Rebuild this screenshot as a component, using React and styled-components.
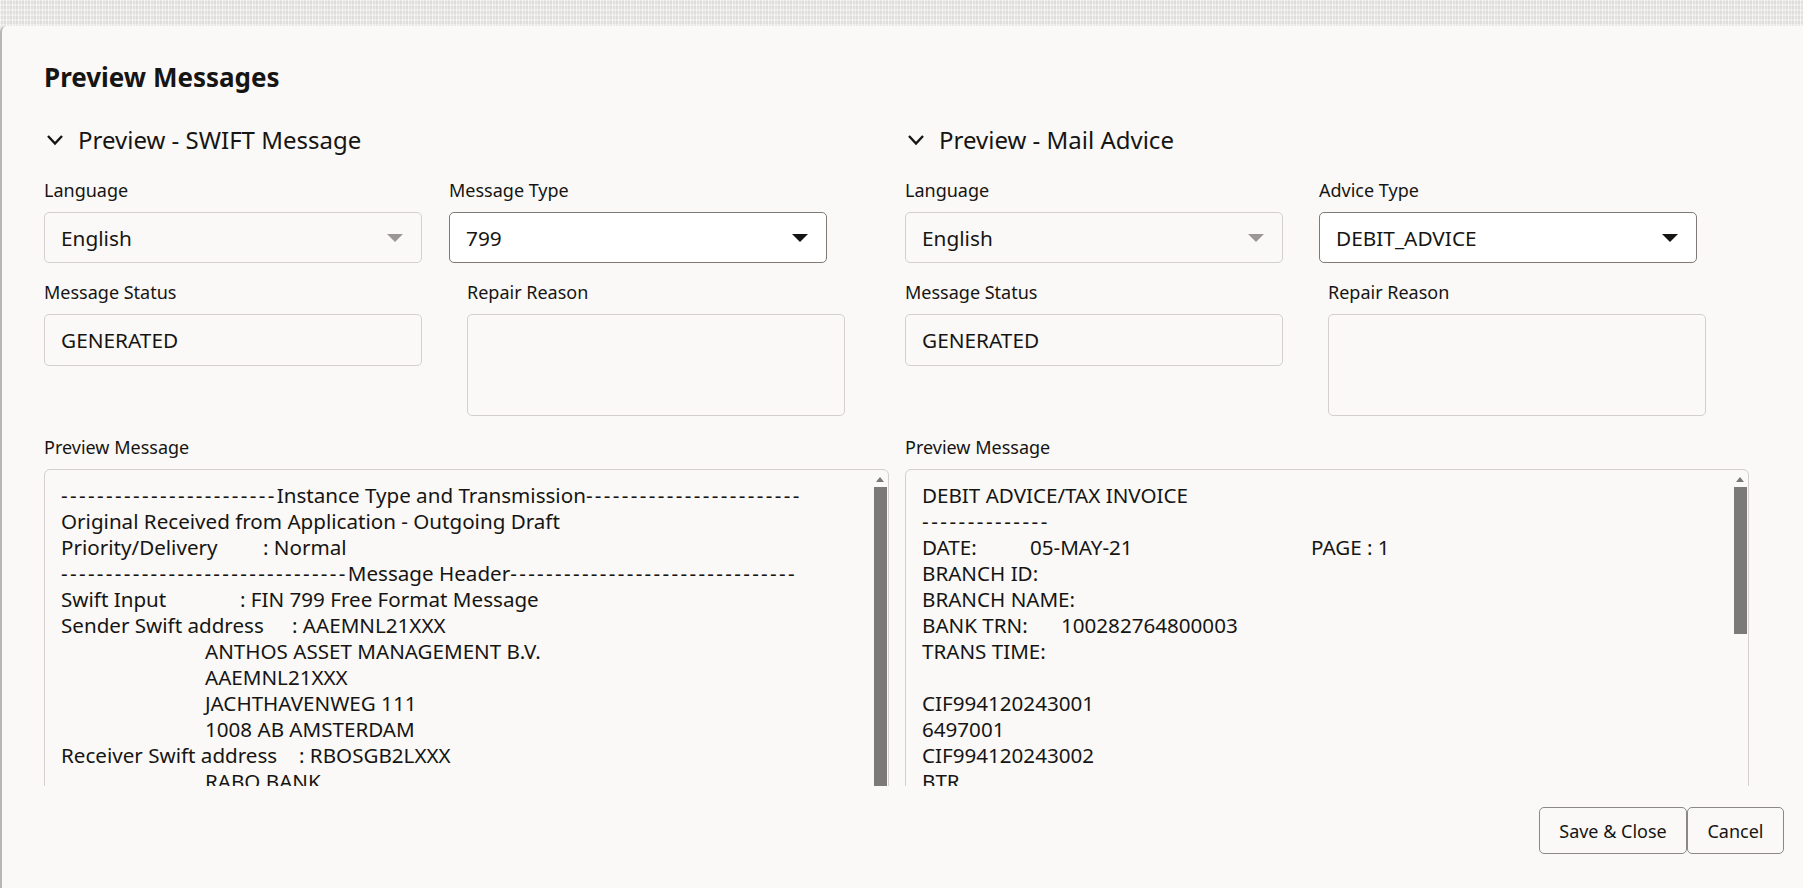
import styled, { createGlobalStyle } from "styled-components";

const GlobalStyle = createGlobalStyle`
  html, body {
    margin: 0;
    padding: 0;
    height: 100%;
    overflow: hidden;
  }
  body {
    font-family: "Noto Sans", "Liberation Sans", sans-serif;
    color: #161513;
    background: #ebeae8;
  }
`;

const Page = styled.div`
  height: 888px;
  padding-top: 26px;
  box-sizing: border-box;
  background:
    repeating-linear-gradient(90deg, rgba(255,255,255,0.5) 0 1px, rgba(0,0,0,0.015) 1px 3px, rgba(255,255,255,0.25) 3px 4px, rgba(0,0,0,0.03) 4px 6px),
    repeating-linear-gradient(0deg, rgba(255,255,255,0.3) 0 2px, rgba(0,0,0,0.02) 2px 5px),
    #e9e8e6;
  background-size: 100% 26px;
  background-repeat: no-repeat;
`;

const Dialog = styled.div`
  height: 862px;
  background: #faf9f7;
  border-left: 2px solid #b8b7b5;
  border-top-left-radius: 6px;
  display: flex;
  flex-direction: column;
  box-sizing: border-box;
`;

const Title = styled.h1`
  margin: 0;
  padding: 36px 0 0 42px;
  font-size: 26px;
  line-height: 30px;
  font-weight: 700;
`;

const Body = styled.div`
  flex: 1;
  overflow: hidden;
  display: grid;
  grid-template-columns: 845px 844px;
  column-gap: 16px;
  padding: 34px 0 0 42px;
`;

const Column = styled.section`
  display: flex;
  flex-direction: column;
`;

const SectionHead = styled.div`
  display: flex;
  align-items: center;
  gap: 14px;
  padding-left: 2px;
  font-size: 24px;
  line-height: 28px;
  margin-bottom: 26px;
`;

const FieldRow = styled.div`
  display: flex;
  align-items: flex-start;
  gap: ${(p) => p.gap}px;
  margin-bottom: ${(p) => p.mb}px;
`;

const Field = styled.div`
  display: flex;
  flex-direction: column;
  width: ${(p) => p.w || 378}px;
  margin-left: ${(p) => p.offset || 0}px;
`;

const Label = styled.label`
  font-size: 18px;
  line-height: 20px;
  margin-bottom: 12px;
  white-space: nowrap;
`;

const Box = styled.div`
  box-sizing: border-box;
  height: ${(p) => p.h || 52}px;
  border: 1px solid ${(p) => (p.active ? "#7d7a77" : "#d3d0cc")};
  border-radius: 5px;
  background: ${(p) => (p.active ? "#ffffff" : "#faf9f7")};
  display: flex;
  align-items: center;
  justify-content: space-between;
  padding: 0 16px;
  font-size: 20.8px;
`;

const Caret = styled.span`
  width: 0;
  height: 0;
  border-left: 8px solid transparent;
  border-right: 8px solid transparent;
  border-top: 8px solid ${(p) => (p.active ? "#161513" : "#9a9794")};
  margin-right: 2px;
`;

const Preview = styled.div`
  box-sizing: border-box;
  height: 340px;
  width: ${(p) => p.w}px;
  border: 1px solid #d3d0cc;
  border-radius: 6px;
  display: flex;
  background: #faf9f7;
`;

const PreviewText = styled.div`
  flex: 1;
  padding: 12px 16px 0 16px;
  font-size: 20.6px;
  line-height: 26px;
  white-space: pre;
  overflow: hidden;
`;

const Line = styled.div`
  display: flex;
  height: 26px;
`;

const Key = styled.span`
  display: inline-block;
  width: ${(p) => p.w}px;
  flex: none;
`;

const Dashes = styled.span`
  letter-spacing: ${(p) => p.spacing}px;
`;

const ScrollTrack = styled.div`
  width: 14px;
  display: flex;
  flex-direction: column;
  align-items: center;
  padding-top: 7px;
  margin-right: 1px;
`;

const ScrollArrow = styled.span`
  width: 0;
  height: 0;
  border-left: 4px solid transparent;
  border-right: 4px solid transparent;
  border-bottom: 5px solid #7a7876;
  margin-bottom: 5px;
`;

const Thumb = styled.div`
  width: 13px;
  height: ${(p) => p.h}px;
  background: #7b7a78;
`;

const Footer = styled.div`
  height: 102px;
  display: flex;
  justify-content: flex-end;
  align-items: flex-start;
  padding: 21px 19px 0 0;
  box-sizing: border-box;
`;

const Button = styled.button`
  height: 47px;
  padding: 0;
  font-family: inherit;
  font-size: 18px;
  white-space: nowrap;
  color: #161513;
  background: #faf9f7;
  border: 1px solid #8c8985;
  border-radius: 5px;
  cursor: pointer;
  width: ${(p) => p.w}px;
`;

const Chevron = () => (
  <svg width="18" height="12" viewBox="0 0 18 12">
    <polyline points="2,2 9,9.5 16,2" fill="none" stroke="#161513" strokeWidth="2.4" />
  </svg>
);

const dash = (n) => "-".repeat(n);

const swiftLines = [
  { d: 24, s: 2.36, v: "Instance Type and Transmission" },
  { v: "Original Received from Application - Outgoing Draft" },
  { k: "Priority/Delivery", w: 202, v: ": Normal" },
  { d: 32, s: 2.33, v: "Message Header" },
  { k: "Swift Input", w: 179, v: ": FIN 799 Free Format Message" },
  { k: "Sender Swift address", w: 231, v: ": AAEMNL21XXX" },
  { k: "", w: 144, v: "ANTHOS ASSET MANAGEMENT B.V." },
  { k: "", w: 144, v: "AAEMNL21XXX" },
  { k: "", w: 144, v: "JACHTHAVENWEG 111" },
  { k: "", w: 144, v: "1008 AB AMSTERDAM" },
  { k: "Receiver Swift address", w: 238, v: ": RBOSGB2LXXX" },
  { k: "", w: 144, v: "RABO BANK" },
  { k: "", w: 144, v: "CROESESTRAAT 40" },
];

const adviceLines = [
  { v: "DEBIT ADVICE/TAX INVOICE" },
  { d: 14, s: 2.5, v: "", single: true },
  { k: "DATE:", w: 108, k2: "05-MAY-21", w2: 281, v: "PAGE : 1" },
  { v: "BRANCH ID:" },
  { v: "BRANCH NAME:" },
  { k: "BANK TRN:", w: 139, v: "100282764800003" },
  { v: "TRANS TIME:" },
  { v: "" },
  { v: "CIF994120243001" },
  { v: "6497001" },
  { v: "CIF994120243002" },
  { v: "BTR" },
];

const TextLines = ({ lines }) => (
  <PreviewText>
    {lines.map((l, i) => (
      <Line key={i}>
        {l.d && <Dashes spacing={l.s}>{dash(l.d)}</Dashes>}
        {l.k !== undefined && <Key w={l.w}>{l.k}</Key>}
        {l.k2 !== undefined && <Key w={l.w2}>{l.k2}</Key>}
        <span>{l.v}</span>
        {l.d && !l.single && <Dashes spacing={l.s}>{dash(l.d)}</Dashes>}
      </Line>
    ))}
  </PreviewText>
);

const PreviewSection = ({ title, typeLabel, typeValue, typeGap, repairOffset, previewW, lines, thumbH }) => (
  <Column>
    <SectionHead>
      <Chevron />
      {title}
    </SectionHead>
    <FieldRow gap={typeGap} mb={19}>
      <Field>
        <Label>Language</Label>
        <Box h={51}>
          English
          <Caret />
        </Box>
      </Field>
      <Field>
        <Label>{typeLabel}</Label>
        <Box h={51} active>
          {typeValue}
          <Caret active />
        </Box>
      </Field>
    </FieldRow>
    <FieldRow gap={typeGap} mb={21}>
      <Field>
        <Label>Message Status</Label>
        <Box>GENERATED</Box>
      </Field>
      <Field offset={repairOffset}>
        <Label>Repair Reason</Label>
        <Box h={102} />
      </Field>
    </FieldRow>
    <Field w={previewW}>
      <Label>Preview Message</Label>
      <Preview w={previewW}>
        <TextLines lines={lines} />
        <ScrollTrack>
          <ScrollArrow />
          <Thumb h={thumbH} />
        </ScrollTrack>
      </Preview>
    </Field>
  </Column>
);

export default function App() {
  return (
    <>
      <GlobalStyle />
      <Page>
        <Dialog>
          <Title>Preview Messages</Title>
          <Body>
            <PreviewSection
              title="Preview - SWIFT Message"
              typeLabel="Message Type"
              typeValue="799"
              typeGap={27}
              repairOffset={18}
              previewW={845}
              lines={swiftLines}
              thumbH={320}
            />
            <PreviewSection
              title="Preview - Mail Advice"
              typeLabel="Advice Type"
              typeValue="DEBIT_ADVICE"
              typeGap={36}
              repairOffset={9}
              previewW={844}
              lines={adviceLines}
              thumbH={147}
            />
          </Body>
          <Footer>
            <Button w={148}>Save &amp; Close</Button>
            <Button w={97}>Cancel</Button>
          </Footer>
        </Dialog>
      </Page>
    </>
  );
}
